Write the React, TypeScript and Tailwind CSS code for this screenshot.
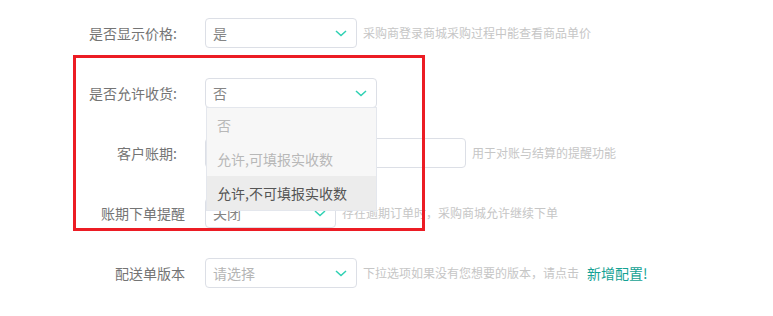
const Chevron = () => (
  <svg width="12" height="7" viewBox="0 0 12 7" className="shrink-0">
    <path d="M1 1l5 4.5L11 1" fill="none" stroke="#2fd1b3" strokeWidth="1.5" />
  </svg>
);

const Select = ({ value, width, placeholder }: { value: string; width: string; placeholder?: boolean }) => (
  <div
    className={
      "h-[30px] flex items-center justify-between pl-[7px] pr-[9px] border border-[#dcdfe6] rounded-[4px] bg-white text-[14px] " +
      width +
      (placeholder ? " text-[#b5b5b5]" : " text-[#858585]")
    }
  >
    <span>{value}</span>
    <Chevron />
  </div>
);

const Hint = ({ children }: { children: React.ReactNode }) => (
  <span className="ml-[6px] text-[12px] text-[#c6c6c6]">{children}</span>
);

export default function App() {
  return (
    <div
      className="relative w-[773px] h-[316px] bg-white overflow-hidden pt-[18px]"
      style={{ fontFamily: '"Noto Sans CJK SC", "Noto Sans", sans-serif' }}
    >
      <div className="flex items-center h-[30px] mb-[30px]">
        <div className="w-[205px] pr-[28px] text-right text-[14px] text-[#747474]">是否显示价格:</div>
        <Select value="是" width="w-[152px]" />
        <Hint>采购商登录商城采购过程中能查看商品单价</Hint>
      </div>

      <div className="flex items-center h-[30px] mb-[30px]">
        <div className="w-[205px] pr-[28px] text-right text-[14px] text-[#747474]">是否允许收货:</div>
        <div className="relative">
          <Select value="否" width="w-[172px]" />
          <div className="absolute left-[1px] top-[29px] w-[171px] z-10 bg-[#f7f7f7] border border-[#e4e7ed] text-[14px]">
            <div className="h-[34px] flex items-center pl-[10px] text-[#b8b8b8]">否</div>
            <div className="h-[34px] flex items-center pl-[10px] text-[#b8b8b8]">允许,可填报实收数</div>
            <div className="h-[34px] flex items-center pl-[10px] text-[#555] bg-[#ececec]">允许,不可填报实收数</div>
          </div>
        </div>
      </div>

      <div className="flex items-center h-[30px] mb-[30px]">
        <div className="w-[205px] pr-[28px] text-right text-[14px] text-[#747474]">客户账期:</div>
        <div className="h-[30px] w-[261px] border border-[#dcdfe6] rounded-[4px] bg-white" />
        <Hint>用于对账与结算的提醒功能</Hint>
      </div>

      <div className="flex items-center h-[30px] mb-[30px]">
        <div className="w-[205px] pr-[20px] text-right text-[14px] text-[#747474]">账期下单提醒</div>
        <Select value="关闭" width="w-[131px]" />
        <Hint>存在逾期订单时，采购商城允许继续下单</Hint>
      </div>

      <div className="flex items-center h-[30px]">
        <div className="w-[205px] pr-[20px] text-right text-[14px] text-[#747474]">配送单版本</div>
        <Select value="请选择" width="w-[152px]" placeholder />
        <Hint>下拉选项如果没有您想要的版本，请点击</Hint>
        <span className="ml-[8px] text-[14px] text-[#14a294]">新增配置!</span>
      </div>

      <div className="absolute left-[73px] top-[55px] w-[352px] h-[176px] border-[3px] border-[#ec1c24] z-20 pointer-events-none" />
    </div>
  );
}
